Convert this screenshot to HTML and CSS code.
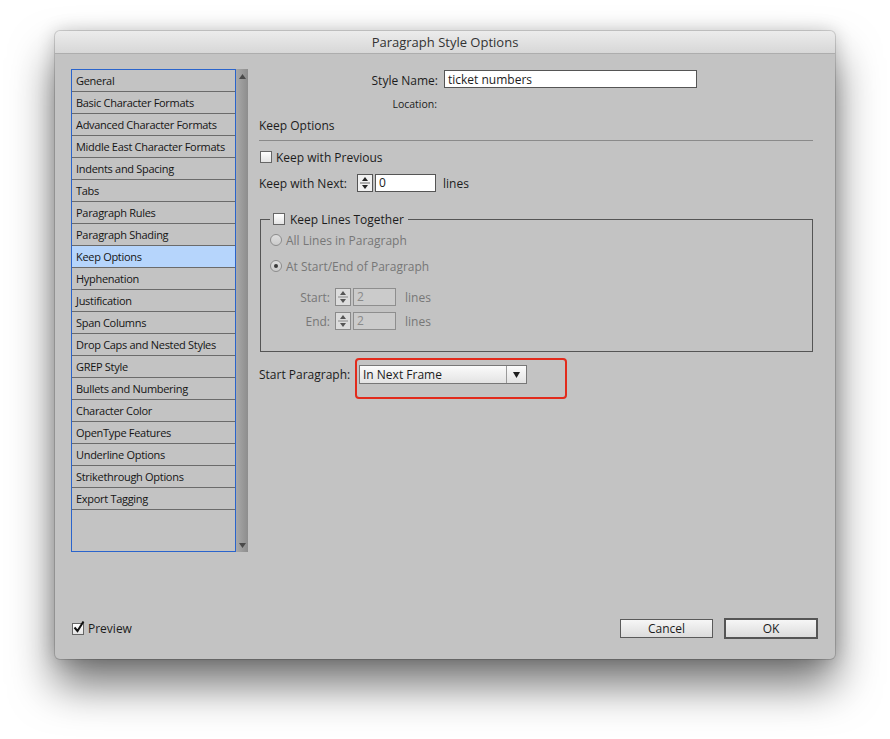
FILE: index.html
```html
<!DOCTYPE html>
<html lang="en">
<head>
    <meta charset="UTF-8">
    <title>Paragraph Style Options</title>
    <link rel="stylesheet" href="styles.css">
</head>
<body>
    <div class="window">
        <div class="titlebar">Paragraph Style Options</div>

        <div class="main">
            <!-- category list -->
            <div class="sidebar">
                <ul class="cat-list">
                    <li>General</li>
                    <li>Basic Character Formats</li>
                    <li>Advanced Character Formats</li>
                    <li>Middle East Character Formats</li>
                    <li>Indents and Spacing</li>
                    <li>Tabs</li>
                    <li>Paragraph Rules</li>
                    <li>Paragraph Shading</li>
                    <li class="selected">Keep Options</li>
                    <li>Hyphenation</li>
                    <li>Justification</li>
                    <li>Span Columns</li>
                    <li>Drop Caps and Nested Styles</li>
                    <li>GREP Style</li>
                    <li>Bullets and Numbering</li>
                    <li>Character Color</li>
                    <li>OpenType Features</li>
                    <li>Underline Options</li>
                    <li>Strikethrough Options</li>
                    <li>Export Tagging</li>
                </ul>
                <div class="scrollbar">
                    <svg width="7" height="5" viewBox="0 0 7 5"><path d="M3.5 0 L7 5 L0 5Z" fill="#4a4a4a"/></svg>
                    <svg width="7" height="5" viewBox="0 0 7 5"><path d="M0 0 L7 0 L3.5 5Z" fill="#4a4a4a"/></svg>
                </div>
            </div>

            <!-- options panel -->
            <div class="panel">
                <div class="name-row">
                    <label class="name-label">Style Name:</label>
                    <div class="name-input">ticket numbers</div>
                </div>
                <div class="location">Location:</div>
                <div class="section-title">Keep Options</div>
                <div class="rule"></div>

                <div class="check-row">
                    <span class="checkbox"></span>
                    <span>Keep with Previous</span>
                </div>

                <div class="next-row">
                    <span class="next-label">Keep with Next:</span>
                    <svg class="spin" width="16" height="18" viewBox="0 0 16 18"><rect x="0.5" y="0.5" width="15" height="17" fill="#f1f1f1" stroke="#555"/><line x1="3" y1="9" x2="13" y2="9" stroke="#666"/><path d="M8 3 L11 7 L5 7Z" fill="#222"/><path d="M8 15 L11 11 L5 11Z" fill="#222"/></svg>
                    <div class="num-input">0</div>
                    <span class="unit">lines</span>
                </div>

                <fieldset class="keep-lines">
                    <legend>
                        <span class="legend-inner">
                            <span class="checkbox"></span>
                            <span>Keep Lines Together</span>
                        </span>
                    </legend>
                    <div class="radio-row first">
                        <span class="radio"></span>
                        <span>All Lines in Paragraph</span>
                    </div>
                    <div class="radio-row">
                        <span class="radio on"></span>
                        <span>At Start/End of Paragraph</span>
                    </div>
                    <div class="lines-row first">
                        <span class="lines-label">Start:</span>
                        <svg class="spin" width="16" height="18" viewBox="0 0 16 18"><rect x="0.5" y="0.5" width="15" height="17" fill="#dcdcdc" stroke="#8a8a8a"/><line x1="3" y1="9" x2="13" y2="9" stroke="#8a8a8a"/><path d="M8 3 L11 7 L5 7Z" fill="#555"/><path d="M8 15 L11 11 L5 11Z" fill="#555"/></svg>
                        <div class="num-input disabled">2</div>
                        <span class="unit wide">lines</span>
                    </div>
                    <div class="lines-row">
                        <span class="lines-label">End:</span>
                        <svg class="spin" width="16" height="18" viewBox="0 0 16 18"><rect x="0.5" y="0.5" width="15" height="17" fill="#dcdcdc" stroke="#8a8a8a"/><line x1="3" y1="9" x2="13" y2="9" stroke="#8a8a8a"/><path d="M8 3 L11 7 L5 7Z" fill="#555"/><path d="M8 15 L11 11 L5 11Z" fill="#555"/></svg>
                        <div class="num-input disabled">2</div>
                        <span class="unit wide">lines</span>
                    </div>
                </fieldset>

                <div class="start-row">
                    <span class="start-label">Start Paragraph:</span>
                    <div class="highlight">
                        <div class="select">
                            <span class="select-value">In Next Frame</span>
                            <span class="select-arrow">
                                <svg width="7" height="6" viewBox="0 0 7 6"><path d="M0 0 L7 0 L3.5 6Z" fill="#1e1e1e"/></svg>
                            </span>
                        </div>
                    </div>
                </div>
            </div>
        </div>

        <div class="footer">
            <div class="preview">
                <span class="checkbox checked">
                    <svg width="13" height="13" viewBox="0 0 13 13"><path d="M2.5 6.5 L5.5 10 L11.5 0.5" fill="none" stroke="#111" stroke-width="2"/></svg>
                </span>
                <span>Preview</span>
            </div>
            <div class="buttons">
                <button class="btn">Cancel</button>
                <button class="btn default">OK</button>
            </div>
        </div>
    </div>
</body>
</html>
```

FILE: styles.css
```css
html {
    background-color: #ffffff;
}
body {
    margin: 0;
    padding: 31px 0 0 55px;
    height: 739px;
    box-sizing: border-box;
    overflow: hidden;
    background-color: #ffffff;
    font-family: "Open Sans", "Noto Sans", sans-serif;
    color: #1c1c1c;
}
.window {
    width: 780px;
    height: 628px;
    background: #c3c3c3;
    border-radius: 5px;
    overflow: hidden;
    display: flex;
    flex-direction: column;
    box-shadow: 0 0 0 1px rgba(0,0,0,0.14), 0 0 18px rgba(0,0,0,0.18), 0 26px 44px rgba(0,0,0,0.55);
}
.titlebar {
    height: 22px;
    line-height: 22px;
    text-align: center;
    font-size: 13px;
    color: #333;
    background: linear-gradient(#ececec, #d7d7d7);
    border-bottom: 1px solid #adadad;
}
.main {
    flex: 1;
    display: flex;
    padding: 14px 0 0 16px;
}

/* category list */
.sidebar {
    display: flex;
    height: 483px;
    margin-top: 1px;
}
.cat-list {
    list-style: none;
    margin: 0;
    padding: 0;
    width: 165px;
    box-sizing: border-box;
    border: 1px solid #2a64cc;
}
.cat-list li {
    height: 21px;
    line-height: 21px;
    border-bottom: 1px solid #6b6b6b;
    padding-left: 4px;
    font-size: 11px;
    letter-spacing: -0.3px;
    color: #151515;
    white-space: nowrap;
}
.cat-list li.selected {
    background: #b6d5fc;
}
.scrollbar {
    width: 12px;
    background: linear-gradient(to right, #a9a9a9, #8d8d8d);
    display: flex;
    flex-direction: column;
    justify-content: space-between;
    align-items: center;
    padding: 5px 0 4px;
    box-sizing: border-box;
}

/* right panel */
.panel {
    margin-left: 11px;
    width: 554px;
    font-size: 12px;
}
.name-row {
    display: flex;
    align-items: center;
    margin-top: 2px;
    height: 18px;
}
.name-label {
    width: 179px;
    text-align: right;
    margin-right: 6px;
    padding-top: 2px;
}
.name-input {
    width: 253px;
    height: 18px;
    box-sizing: border-box;
    border: 1px solid #555;
    background: #fff;
    padding: 1px 0 0 3px;
    line-height: 16px;
}
.location {
    margin-top: 9px;
    height: 14px;
    line-height: 14px;
    width: 178px;
    text-align: right;
    font-size: 10.5px;
}
.section-title {
    margin-top: 7px;
    height: 16px;
    line-height: 16px;
}
.rule {
    margin-top: 6px;
    height: 1px;
    background: #8a8a8a;
}
.check-row {
    margin-top: 9px;
    height: 14px;
    display: flex;
    align-items: center;
    padding-left: 1px;
}
.checkbox {
    width: 12px;
    height: 12px;
    box-sizing: border-box;
    border: 1px solid #666;
    background: linear-gradient(#ffffff, #e4e4e4);
    margin-right: 4px;
    flex-shrink: 0;
    position: relative;
}
.checkbox.checked svg {
    position: absolute;
    left: -1px;
    top: -3px;
}
.next-row {
    margin-top: 10px;
    height: 18px;
    display: flex;
    align-items: center;
}
.next-label {
    width: 98px;
    white-space: nowrap;
}
.spin {
    display: block;
    flex-shrink: 0;
}
.num-input {
    margin-left: 2px;
    width: 61px;
    height: 18px;
    box-sizing: border-box;
    border: 1px solid #555;
    background: #fff;
    padding-left: 3px;
    line-height: 16px;
}
.num-input.disabled {
    width: 43px;
    background: #cbcbcb;
    border-color: #8e8e8e;
    color: #8a8a8a;
}
.unit {
    margin-left: 7px;
}
.unit.wide {
    margin-left: 9px;
}

/* keep lines group */
.keep-lines {
    margin: 20px 0 0 1px;
    padding: 0 0 21px 9px;
    border: 1px solid #555;
    min-width: 0;
}
.keep-lines legend {
    padding: 0 4px 0 3px;
}
.legend-inner {
    display: flex;
    align-items: center;
    height: 14px;
}
.legend-inner .checkbox {
    margin-right: 5px;
}
.radio-row {
    margin-top: 12px;
    height: 14px;
    display: flex;
    align-items: center;
    color: #777;
}
.radio-row.first {
    margin-top: 7px;
}
.radio {
    width: 12px;
    height: 12px;
    box-sizing: border-box;
    border-radius: 50%;
    border: 1px solid #8c8c8c;
    background: linear-gradient(#dedede, #cbcbcb);
    margin-right: 4px;
    display: flex;
    align-items: center;
    justify-content: center;
}
.radio.on::after {
    content: "";
    width: 4px;
    height: 4px;
    border-radius: 50%;
    background: #3a3a3a;
}
.lines-row {
    margin-top: 6px;
    height: 18px;
    display: flex;
    align-items: center;
    color: #777;
}
.lines-row.first {
    margin-top: 15px;
}
.lines-label {
    width: 60px;
    text-align: right;
    margin-right: 5px;
}

/* start paragraph */
.start-row {
    margin-top: 13px;
    display: flex;
    align-items: flex-start;
}
.start-label {
    width: 94px;
    line-height: 19px;
    margin-right: 2px;
    white-space: nowrap;
}
.highlight {
    border: 2px solid #e22b1c;
    border-radius: 4px;
    padding: 5px 38px 13px 2px;
    margin: -7px 0 -16px 0;
}
.select {
    width: 168px;
    height: 19px;
    box-sizing: border-box;
    border: 1px solid #777;
    background: linear-gradient(#fbfbfb, #e3e3e3);
    display: flex;
}
.select-value {
    flex: 1;
    padding: 1px 0 0 3px;
    line-height: 16px;
}
.select-arrow {
    width: 19px;
    border-left: 1px solid #9a9a9a;
    display: flex;
    align-items: center;
    justify-content: center;
}

/* footer */
.footer {
    display: flex;
    align-items: center;
    padding: 0 17px 20px 17px;
}
.preview {
    display: flex;
    align-items: center;
    font-size: 12px;
}
.buttons {
    margin-left: auto;
    display: flex;
    align-items: center;
    gap: 11px;
}
.btn {
    width: 93px;
    height: 19px;
    box-sizing: border-box;
    border: 1px solid #5a5a5a;
    background: linear-gradient(#f6f6f6, #dcdcdc);
    font-family: "Open Sans", "Noto Sans", sans-serif;
    font-size: 12px;
    color: #1c1c1c;
    padding: 0;
}
.btn.default {
    width: 94px;
    height: 21px;
    border: 2px solid #555;
}
```
